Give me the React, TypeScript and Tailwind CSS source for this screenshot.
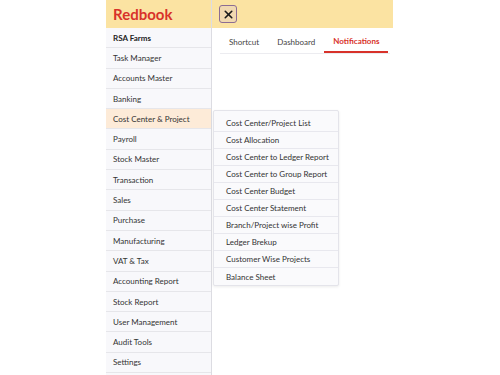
import { X } from 'lucide-react';

const menu = [
  'Task Manager',
  'Accounts Master',
  'Banking',
  'Cost Center & Project',
  'Payroll',
  'Stock Master',
  'Transaction',
  'Sales',
  'Purchase',
  'Manufacturing',
  'VAT & Tax',
  'Accounting Report',
  'Stock Report',
  'User Management',
  'Audit Tools',
  'Settings',
];

const subMenu = [
  'Cost Center/Project List',
  'Cost Allocation',
  'Cost Center to Ledger Report',
  'Cost Center to Group Report',
  'Cost Center Budget',
  'Cost Center Statement',
  'Branch/Project wise Profit',
  'Ledger Brekup',
  'Customer Wise Projects',
  'Balance Sheet',
];

export default function App() {
  return (
    <div className="relative w-[500px] h-[375px] overflow-hidden bg-white font-['Lato',sans-serif] text-[8px] text-[#333]">
      <div className="flex pl-[106px] h-full">
        {/* Sidebar */}
        <aside className="w-[106px] h-full bg-[#f8f8fb] border-r border-[#dcdce2] flex flex-col">
          <div className="h-[28px] bg-[#fbe3a2] flex items-center pl-[7px]">
            <span className="text-[15px] font-bold text-[#d8322a] leading-none">Redbook</span>
          </div>
          <div className="h-[20.3px] flex items-center pl-[7px] border-b border-[#e6e6ea] font-bold text-[#222]">
            RSA Farms
          </div>
          {menu.map((m) => (
            <div
              key={m}
              className={`h-[20.3px] flex items-center pl-[7px] border-b border-[#e6e6ea] ${
                m === 'Cost Center & Project' ? 'bg-[#fdebd8]' : ''
              }`}
            >
              {m}
            </div>
          ))}
        </aside>

        {/* Main */}
        <div className="w-[181px] flex flex-col">
          <div className="h-[28px] bg-[#fbe3a2] flex items-center pl-[7px]">
            <div className="w-[18px] h-[18px] rounded-[3px] border border-[#8c6d93] bg-[#f1d9b0] flex items-center justify-center">
              <X size={13} strokeWidth={3} className="text-[#1a1a1a]" />
            </div>
          </div>
          <div className="ml-[8px] mr-[3px] mt-[3px] flex border-b border-[#ececf0]">
            <div className="px-[9px] h-[22px] flex items-center text-[#444]">Shortcut</div>
            <div className="px-[9px] h-[22px] flex items-center text-[#444]">Dashboard</div>
            <div className="px-[9px] h-[22px] flex items-center font-bold text-[#d8322a] border-b-2 border-[#d8322a] -mb-px">
              Notifications
            </div>
          </div>
        </div>
      </div>

      {/* Cost Center submenu */}
      <div className="absolute left-[213px] top-[110px] w-[126px] pt-[4px] bg-[#fafafc] border border-[#e4e4ea] rounded-[2px] shadow-[0_1px_3px_rgba(0,0,0,0.08)]">
        {subMenu.map((s, i) => (
          <div
            key={s}
            className={`h-[17px] flex items-center pl-[12px] text-[#333] ${
              i < subMenu.length - 1 ? 'border-b border-[#e8e8ee]' : ''
            }`}
          >
            {s}
          </div>
        ))}
      </div>
    </div>
  );
}
